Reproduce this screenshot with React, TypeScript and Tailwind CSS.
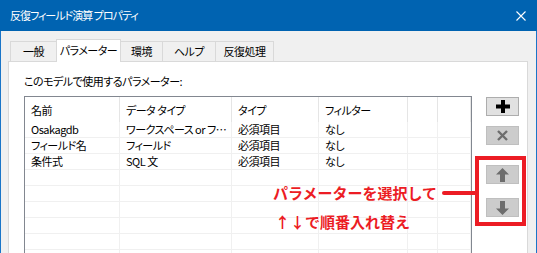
const columns = ["名前", "データ タイプ", "タイプ", "フィルター", "", ""]

const rows = [
  ["Osakagdb", "ワークスペース or フ…", "必須項目", "なし", "", ""],
  ["フィールド名", "フィールド", "必須項目", "なし", "", ""],
  ["条件式", "SQL 文", "必須項目", "なし", "", ""],
  ["", "", "", "", "", ""],
  ["", "", "", "", "", ""],
  ["", "", "", "", "", ""],
  ["", "", "", "", "", ""],
  ["", "", "", "", "", ""],
  ["", "", "", "", "", ""],
]

const PlusIcon = () => (
  <svg width="14" height="13" viewBox="0 0 14 13">
    <rect x="5" y="0" width="4" height="13" fill="#000" />
    <rect x="0" y="4.5" width="14" height="4" fill="#000" />
  </svg>
)

const DeleteIcon = () => (
  <svg width="11" height="11" viewBox="0 0 11 11">
    <path d="M1 1 L10 10 M10 1 L1 10" stroke="#6d6d6d" strokeWidth="2.4" />
  </svg>
)

const UpIcon = () => (
  <svg width="13" height="14" viewBox="0 0 13 14">
    <path d="M6.5 0 L13 6.5 L9 6.5 L9 14 L4 14 L4 6.5 L0 6.5 Z" fill="#6d6d6d" />
  </svg>
)

const DownIcon = () => (
  <svg width="13" height="14" viewBox="0 0 13 14">
    <path d="M6.5 14 L13 7.5 L9 7.5 L9 0 L4 0 L4 7.5 L0 7.5 Z" fill="#6d6d6d" />
  </svg>
)

export default function App() {
  return (
    <div className="relative w-[537px] h-[253px] overflow-hidden flex flex-col bg-[#1a75c8] font-['Noto_Sans_CJK_JP',sans-serif] [font-feature-settings:'palt'] text-[11px] tracking-[-0.5px] text-black">
      {/* title bar */}
      <div className="h-[31px] shrink-0 flex items-center justify-between bg-[#0063b1] pl-[10px] pr-[11px] text-white">
        <span className="text-[11px] tracking-[-1px] leading-none">反復フィールド演算 プロパティ</span>
        <svg width="10" height="10" viewBox="0 0 10 10">
          <path d="M0.5 0.5 L9.5 9.5 M9.5 0.5 L0.5 9.5" stroke="#fff" strokeWidth="1.1" />
        </svg>
      </div>

      <div className="flex-1 mx-px bg-[#f0f0f0] pt-[8px] pl-[7px] pr-[8px] flex flex-col">
        {/* tabs */}
        <div className="flex items-end h-[22px] pl-[2px] whitespace-nowrap">
          <div className="h-[20px] w-[46px] border-l border-t border-[#d9d9d9] flex items-center justify-center">一般</div>
          <div className="relative z-10 h-[23px] -mb-px w-[65px] bg-white border-x border-t border-[#d9d9d9] flex items-center justify-center pb-[2px]">パラメーター</div>
          <div className="h-[20px] w-[41px] border-t border-[#d9d9d9] flex items-center justify-center">環境</div>
          <div className="h-[20px] w-[53px] border-l border-t border-[#d9d9d9] flex items-center justify-center">ヘルプ</div>
          <div className="h-[20px] w-[59px] border-x border-t border-[#d9d9d9] flex items-center justify-center">反復処理</div>
        </div>

        {/* panel */}
        <div className="flex-1 bg-white border border-[#d9d9d9] border-b-0 pl-[15px] pt-[11px]">
          <div className="leading-[16px]">このモデルで使用するパラメーター:</div>
          <div className="flex mt-[7px]">
            <div className="w-[448px] h-[200px] border border-[#828790] border-b-0 overflow-hidden">
              <div className="grid grid-cols-[95px_112px_87px_89px_30px_1fr] h-[25px]">
                {columns.map((c, i) => (
                  <div key={i} className="border-r border-[#e5e5e5] flex items-center pl-[6px] pt-[1px] whitespace-nowrap">
                    {c}
                  </div>
                ))}
              </div>
              {rows.map((r, ri) => (
                <div key={ri} className="grid grid-cols-[95px_112px_87px_89px_30px_1fr] h-[16px] border-b border-[#f0f0f0]">
                  {r.map((c, ci) => (
                    <div key={ci} className="border-r border-[#f0f0f0] flex items-center pl-[6px] leading-none whitespace-nowrap overflow-hidden">
                      {c}
                    </div>
                  ))}
                </div>
              ))}
            </div>

            <div className="ml-[14px] mt-px flex flex-col">
              <div className="w-[33px] h-[19px] bg-[#e1e1e1] border border-[#adadad] flex items-center justify-center">
                <PlusIcon />
              </div>
              <div className="mt-[10px] w-[33px] h-[19px] bg-[#cccccc] border border-[#bfbfbf] flex items-center justify-center">
                <DeleteIcon />
              </div>
              <div className="mt-[20px] w-[33px] h-[19px] bg-[#cccccc] border border-[#bfbfbf] flex items-center justify-center">
                <UpIcon />
              </div>
              <div className="mt-[14px] w-[33px] h-[19px] bg-[#cccccc] border border-[#bfbfbf] flex items-center justify-center">
                <DownIcon />
              </div>
            </div>
          </div>
        </div>
      </div>

      {/* annotation */}
      <div className="absolute left-[475px] top-[156px] w-[51px] h-[70px] border-[4px] border-[#ec1c24]" />
      <div className="absolute left-[442px] top-[191px] w-[34px] h-[4px] rounded-l-full bg-[#ec1c24]" />
      <div className="absolute left-[273px] top-[183px] text-[15px] leading-[20px] tracking-normal font-bold text-[#ec1c24] [font-feature-settings:normal]">
        パラメーターを選択して
      </div>
      <div className="absolute left-[275px] top-[212px] text-[15px] leading-[20px] tracking-normal font-bold text-[#ec1c24] [font-feature-settings:normal]">
        ↑↓で順番入れ替え
      </div>
    </div>
  )
}
